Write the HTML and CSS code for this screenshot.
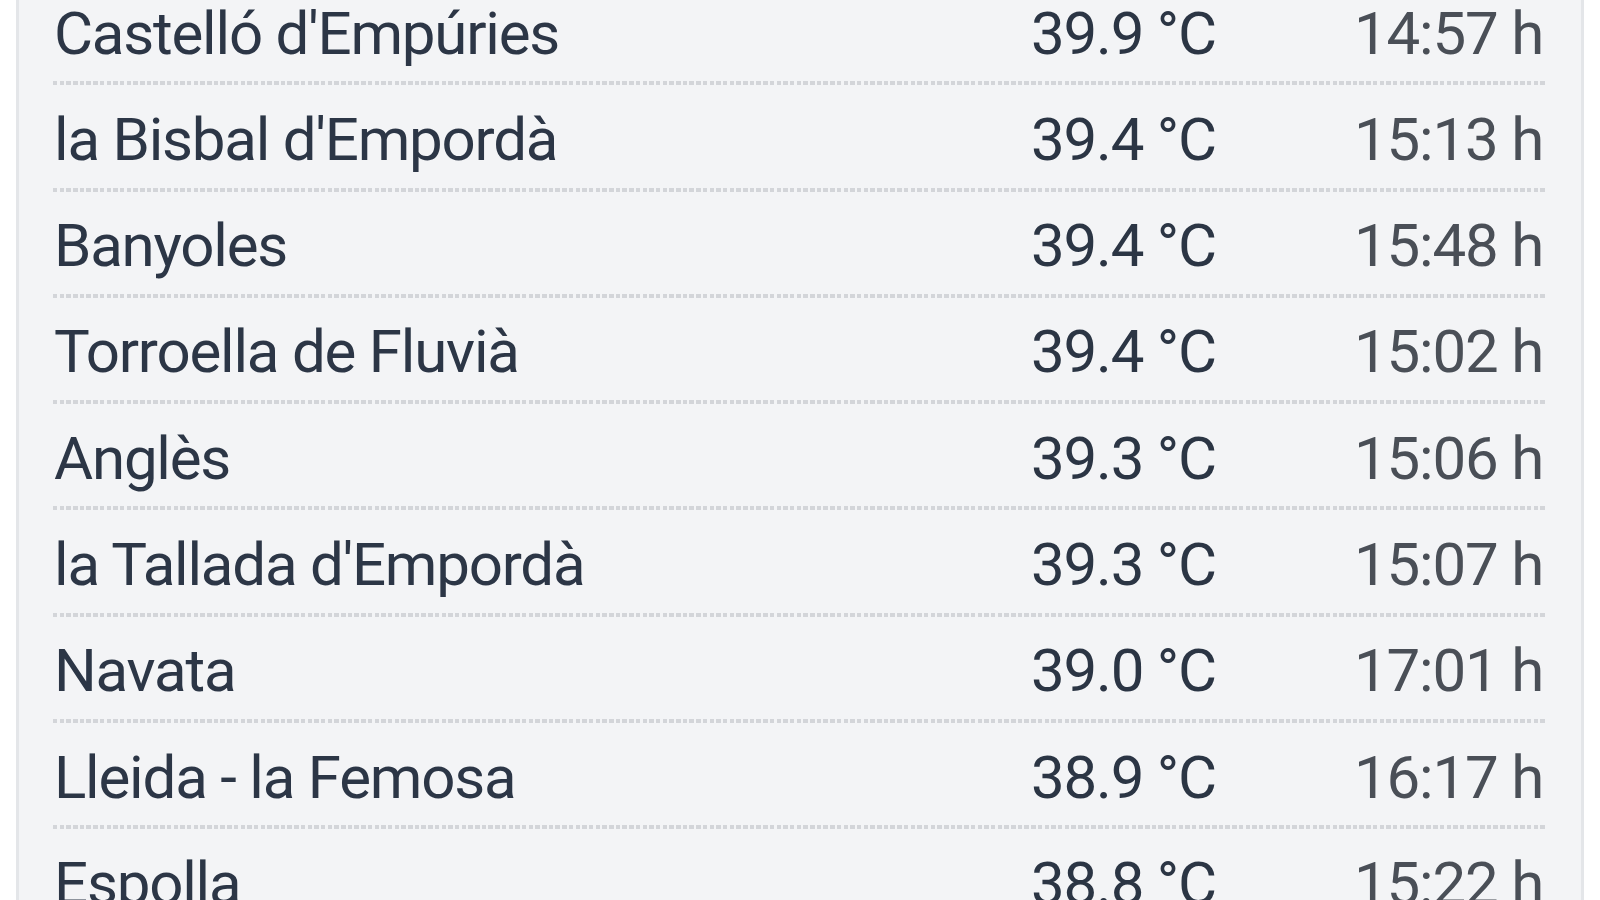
FILE: index.html
```html
<!DOCTYPE html>
<html lang="ca">
<head>
  <meta charset="UTF-8">
  <meta name="viewport" content="width=device-width, initial-scale=1.0">
  <title>Temperatures màximes</title>
  <link rel="stylesheet" href="styles.css">
</head>
<body>
  <div class="card">
    <ul class="ranking">
      <li class="row"><span class="place">Castelló d'Empúries</span><span class="temp">39.9 °C</span><span class="time">14:57 h</span></li>
      <li class="row"><span class="place">la Bisbal d'Empordà</span><span class="temp">39.4 °C</span><span class="time">15:13 h</span></li>
      <li class="row"><span class="place">Banyoles</span><span class="temp">39.4 °C</span><span class="time">15:48 h</span></li>
      <li class="row"><span class="place">Torroella de Fluvià</span><span class="temp">39.4 °C</span><span class="time">15:02 h</span></li>
      <li class="row"><span class="place">Anglès</span><span class="temp">39.3 °C</span><span class="time">15:06 h</span></li>
      <li class="row"><span class="place">la Tallada d'Empordà</span><span class="temp">39.3 °C</span><span class="time">15:07 h</span></li>
      <li class="row"><span class="place">Navata</span><span class="temp">39.0 °C</span><span class="time">17:01 h</span></li>
      <li class="row"><span class="place">Lleida - la Femosa</span><span class="temp">38.9 °C</span><span class="time">16:17 h</span></li>
      <li class="row"><span class="place">Espolla</span><span class="temp">38.8 °C</span><span class="time">15:22 h</span></li>
    </ul>
  </div>
</body>
</html>
```

FILE: styles.css
```css
html, body {
  margin: 0;
  padding: 0;
  background: #ffffff;
  height: 100%;
  overflow: hidden;
}
body {
  font-family: Roboto, 'Noto Sans', sans-serif;
}
.card {
  margin: -21px 16px 0 16px;
  background: #f3f4f6;
  border-left: 3px solid #e4e6e9;
  border-right: 3px solid #e4e6e9;
  padding: 0 34px;
  min-height: 1000px;
}
.ranking {
  list-style: none;
  margin: 0;
  padding: 0;
}
.row {
  display: grid;
  grid-template-columns: 1fr 304px 212px;
  align-items: baseline;
  font-size: 60px;
  line-height: 70px;
  letter-spacing: -1.2px;
  padding: 19.5px 0 12.8px 1px;
  position: relative;
}
.row::after {
  content: '';
  position: absolute;
  left: 0;
  right: 0;
  bottom: -4px;
  height: 4px;
  background: repeating-linear-gradient(to right, #d3d5d9 0 4.5px, transparent 4.5px 6.7px);
}
.row + .row {
  margin-top: 4px;
}
.place {
  color: #2c3646;
  white-space: nowrap;
}
.temp {
  color: #2b3544;
  white-space: nowrap;
}
.time {
  color: #4a4f57;
  text-align: right;
  padding-right: 4px;
  white-space: nowrap;
}
```
